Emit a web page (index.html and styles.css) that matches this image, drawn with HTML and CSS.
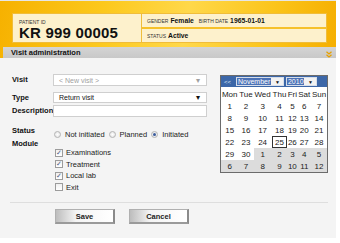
FILE: index.html
```html
<!DOCTYPE html>
<html lang="en">
<head>
    <meta charset="UTF-8">
    <title>Visit administration</title>
    <link rel="stylesheet" href="styles.css">
</head>
<body>
    <div class="panel">
        <div class="top">
            <header class="patient">
                <div class="id-box">
                    <span class="caption">PATIENT ID</span>
                    <span class="pid">KR 999 00005</span>
                </div>
                <div class="info-box">
                    <div class="info-row"><span class="caption">GENDER</span> <b>Female</b> <span class="caption gap">BIRTH DATE</span> <b>1965-01-01</b></div>
                    <div class="info-row"><span class="caption">STATUS</span> <b>Active</b></div>
                </div>
            </header>
            <div class="bar">
                <span>Visit administration</span>
                <svg width="6" height="7" viewBox="0 0 6 7">
                    <path d="M0.5 0.8 L3 3 L5.5 0.8" fill="none" stroke="#e7a100" stroke-width="1.3"/>
                    <path d="M0.5 3.8 L3 6 L5.5 3.8" fill="none" stroke="#e7a100" stroke-width="1.3"/>
                </svg>
            </div>
        </div>

        <section class="content">
            <div class="columns">
                <div class="form">
                    <div class="row row-visit">
                        <label>Visit</label>
                        <div class="select disabled"><span>&lt; New visit &gt;</span><i>▾</i></div>
                    </div>
                    <div class="row row-type">
                        <label>Type</label>
                        <div class="select"><span>Return visit</span><i>▾</i></div>
                    </div>
                    <div class="row row-desc">
                        <label>Description</label>
                        <div class="input"></div>
                    </div>
                    <div class="row row-status">
                        <label>Status</label>
                        <div class="radios">
                            <span class="radio"></span><span class="opt">Not initiated</span>
                            <span class="radio"></span><span class="opt">Planned</span>
                            <span class="radio checked"></span><span class="opt">Initiated</span>
                        </div>
                    </div>
                    <div class="row row-module">
                        <label>Module</label>
                        <div class="checks">
                            <div class="check"><span class="box on">✓</span>Examinations</div>
                            <div class="check"><span class="box on">✓</span>Treatment</div>
                            <div class="check"><span class="box on">✓</span>Local lab</div>
                            <div class="check"><span class="box"></span>Exit</div>
                        </div>
                    </div>
                </div>

                <div class="calendar">
                    <div class="cal-head">
                        <span class="prev">&lt;&lt;</span>
                        <span class="cal-select month"><em>November</em><i>▼</i></span>
                        <span class="cal-select year"><em>2010</em><i>▼</i></span>
                    </div>
                    <table id="days">
                        <tr><th>Mon</th><th>Tue</th><th>Wed</th><th>Thu</th><th>Fri</th><th>Sat</th><th>Sun</th></tr>
                    </table>
                </div>
            </div>

            <div class="actions">
                <button>Save</button>
                <button>Cancel</button>
            </div>
        </section>
    </div>

    <script>
        // november 2010 starts on a monday
        const days = document.getElementById("days");
        let n = 1;
        for (let r = 0; r < 6; r++) {
            const tr = document.createElement("tr");
            for (let c = 0; c < 7; c++) {
                const td = document.createElement("td");
                let d = n;
                if (n > 30) {
                    d = n - 30;
                    td.className = "other";
                }
                if (n == 25) td.className = "today";
                td.textContent = d;
                tr.appendChild(td);
                n++;
            }
            days.appendChild(tr);
        }
    </script>
</body>
</html>
```

FILE: styles.css
```css
body {
    margin: 0;
    background: #fff;
    font-family: "Liberation Sans", Arial, sans-serif;
    color: #111;
}

.panel {
    width: 336px;
}

.top {
    background: linear-gradient(100deg, #f6b100 0%, #fcc81c 30%, #ffd84a 55%, #fbc41a 80%, #f5ae00 100%);
    border-top: 1px solid #e6e6e6;
}

.patient {
    height: 46px;
    box-sizing: border-box;
    padding: 12px 9px 0 12px;
    display: flex;
}

.id-box {
    width: 130px;
    height: 30px;
    box-sizing: border-box;
    background: #fdf1cc;
    border: 1px solid #f0bd3a;
    padding: 5px 0 0 6px;
    display: flex;
    flex-direction: column;
}

.caption {
    font-size: 5px;
    color: #333;
}

.pid {
    font-size: 15px;
    font-weight: bold;
    line-height: 16px;
    letter-spacing: 0.2px;
}

.info-box {
    flex: 1;
    height: 30px;
    box-sizing: border-box;
    display: flex;
    flex-direction: column;
    background: #fdf1cc;
    border: 1px solid #f0bd3a;
    border-left: none;
}

.info-row {
    flex: 1;
    display: flex;
    align-items: center;
    gap: 2px;
    padding-left: 5px;
    font-size: 6.8px;
}

.info-row + .info-row {
    border-top: 2px solid #f6c12a;
}

.info-row .gap {
    margin-left: 3px;
}

.bar {
    margin-left: 3px;
    height: 11px;
    display: flex;
    align-items: center;
    justify-content: space-between;
    padding: 0 4px 0 8px;
    background: linear-gradient(#d4d4d4, #c8c8c8);
    font-size: 7.5px;
    font-weight: bold;
}

.bar svg {
    margin-top: 3px;
}

.content {
    height: 180px;
    box-sizing: border-box;
    background: #f4f4f4;
    padding: 16px 8px 0 10px;
}

.columns {
    display: flex;
    align-items: flex-start;
}

.form {
    width: 195px;
    margin-left: 2px;
    font-size: 7.5px;
}

.row {
    display: flex;
    align-items: flex-start;
}

.row label {
    width: 41px;
    font-weight: bold;
    line-height: 11px;
    flex-shrink: 0;
}

.select, .input {
    flex: 1;
    height: 12px;
    box-sizing: border-box;
    background: #fff;
    border: 1px solid #cfcfcf;
    display: flex;
    align-items: center;
    justify-content: space-between;
    padding: 0 6px 0 5px;
    font-size: 7px;
}

.select.disabled {
    color: #a0a0a0;
}

.select i {
    font-style: normal;
    font-size: 8px;
}

.row-type {
    margin-top: 6px;
}

.row-type .select {
    height: 11px;
}

.row-desc {
    margin-top: 2px;
}

.row-status {
    margin-top: 9px;
}

.row-status label, .row-module label {
    line-height: 9px;
}

.radios {
    margin-top: 4px;
    display: flex;
    align-items: center;
    height: 9px;
    margin-left: 1px;
}

.radio {
    width: 7px;
    height: 7px;
    box-sizing: border-box;
    border-radius: 50%;
    border: 1px solid #b4b4b4;
    background: radial-gradient(#fff, #dedede);
    display: flex;
    align-items: center;
    justify-content: center;
}

.radio.checked::after {
    content: "";
    width: 3px;
    height: 3px;
    border-radius: 50%;
    background: #3b5c9c;
}

.opt {
    margin: 0 4px 0 4px;
    color: #222;
}

.checks {
    margin-top: 8px;
    margin-left: 2px;
}

.check {
    height: 11.5px;
    display: flex;
    align-items: center;
    color: #222;
}

.box {
    width: 8px;
    height: 8px;
    box-sizing: border-box;
    border: 1px solid #9c9c9c;
    background: linear-gradient(#f0f0f0, #fff);
    margin-right: 3px;
    font-size: 7px;
    line-height: 6px;
    text-align: center;
    color: #4a5a80;
}

.calendar {
    width: 108px;
    margin: 1px 0 0 13px;
    box-sizing: border-box;
    border: 1px solid #6b6b6b;
    background: #fff;
}

.cal-head {
    height: 11px;
    background: #3c67a8;
    display: flex;
    align-items: center;
    padding-left: 3px;
}

.prev {
    color: #dfe7f5;
    font-size: 6px;
    width: 12px;
}

.cal-select {
    height: 9px;
    display: flex;
    align-items: center;
    background: #f2f2f2;
    border: 1px solid #d6deea;
    box-sizing: border-box;
    margin-right: 2px;
}

.cal-select em {
    font-style: normal;
    font-size: 7px;
    color: #fff;
    background: #4c72b6;
    height: 7px;
    line-height: 7px;
    padding: 0 1px;
}

.cal-select i {
    font-style: normal;
    font-size: 5px;
    padding: 0 3px 0 4px;
}

.month em {
    width: 32px;
}

.year em {
    width: 15px;
}

#days {
    width: 100%;
    border-collapse: collapse;
    margin-top: 1px;
    font-size: 8px;
    color: #222;
}

#days th, #days td {
    padding: 0;
    height: 12px;
    text-align: center;
    font-weight: normal;
}

#days td.other {
    background: #dcdcdc;
}

#days td.today {
    outline: 1px solid #333;
    outline-offset: -1px;
}

.actions {
    margin-top: 9px;
    border-top: 1px solid #dedede;
    padding: 6px 0 0 45px;
    display: flex;
    gap: 14px;
}

.actions button {
    width: 60px;
    height: 15px;
    padding: 0;
    border: 1px solid #b0b0b0;
    border-right: 2px solid #8a8a8a;
    border-bottom: 2px solid #9a9a9a;
    background: linear-gradient(90deg, #bdbdbd, #f4f4f4 35%, #fff);
    font-family: "Liberation Sans", Arial, sans-serif;
    font-size: 7.5px;
    font-weight: bold;
    color: #222;
}
```
